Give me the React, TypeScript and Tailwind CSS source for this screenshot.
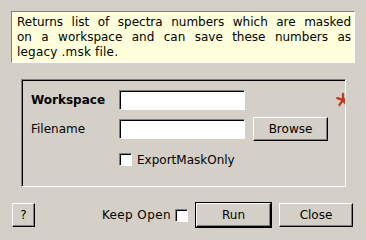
const sunken =
  "border border-t-[#808080] border-l-[#808080] border-r-white border-b-white shadow-[inset_1px_1px_0_#000] bg-white";
const raised =
  "border border-t-white border-l-white border-r-black border-b-black shadow-[inset_-1px_-1px_0_#808080] bg-[#d4d0c8]";

function Check() {
  return <div className={`w-[13px] h-[13px] shrink-0 ${sunken}`} />;
}

export default function App() {
  return (
    <div className="w-[366px] h-[240px] bg-[#d4d0c8] font-['DejaVu_Sans',sans-serif] text-[12px] text-black flex flex-col pt-[11px] pl-[11px] overflow-hidden">
      {/* Description */}
      <div className="w-[344px] h-[52px] bg-[#ffffdc] border border-t-[#808080] border-l-[#808080] border-r-white border-b-white pt-[3px] pl-[5px] pr-[3px] leading-[15px]">
        <div className="text-justify [text-align-last:justify]">Returns list of spectra numbers which are masked</div>
        <div className="text-justify [text-align-last:justify]">on a workspace and can save these numbers as</div>
        <div className="tracking-[0.2px]">legacy .msk file.</div>
      </div>

      {/* Properties */}
      <div className="relative mt-[16px] ml-[10px] w-[325px] h-[108px] border border-t-[#808080] border-l-[#808080] border-r-white border-b-white shadow-[inset_1px_1px_0_#000] overflow-hidden pl-[9px] pt-[10px]">
        <div className="flex items-center h-[20px]">
          <span className="w-[88px] font-bold">Workspace</span>
          <div className={`w-[126px] h-[20px] ${sunken}`} />
        </div>
        <div className="flex items-center h-[24px] mt-[7px]">
          <span className="w-[88px]">Filename</span>
          <div className={`w-[126px] h-[20px] ${sunken}`} />
          <button className={`ml-[8px] w-[75px] h-[24px] ${raised}`}>Browse</button>
        </div>
        <div className="flex items-center h-[13px] mt-[12px] pl-[88px] gap-[5px]">
          <Check />
          <span>ExportMaskOnly</span>
        </div>
        <svg className="absolute right-[-6px] top-[12px]" width="16" height="16" viewBox="0 0 16 16">
          <g stroke="#c23b22" strokeWidth="2.4" strokeLinecap="round">
            <line x1="8" y1="8" x2="8" y2="2" />
            <line x1="8" y1="8" x2="2.3" y2="6.2" />
            <line x1="8" y1="8" x2="4.5" y2="12.9" />
            <line x1="8" y1="8" x2="11.5" y2="12.9" />
            <line x1="8" y1="8" x2="13.7" y2="6.2" />
          </g>
        </svg>
      </div>

      {/* Buttons */}
      <div className="flex items-center h-[26px] mt-[15px] pl-[1px] pr-[13px]">
        <button className={`w-[23px] h-[24px] ${raised}`}>?</button>
        <div className="ml-auto flex items-center">
          <span className="tracking-[0.4px]">Keep Open</span>
          <div className="ml-[4px]">
            <Check />
          </div>
          <div className="ml-[7px] border border-black">
            <button className={`w-[75px] h-[24px] block ${raised}`}>Run</button>
          </div>
          <button className={`ml-[7px] w-[74px] h-[24px] ${raised}`}>Close</button>
        </div>
      </div>
    </div>
  );
}
